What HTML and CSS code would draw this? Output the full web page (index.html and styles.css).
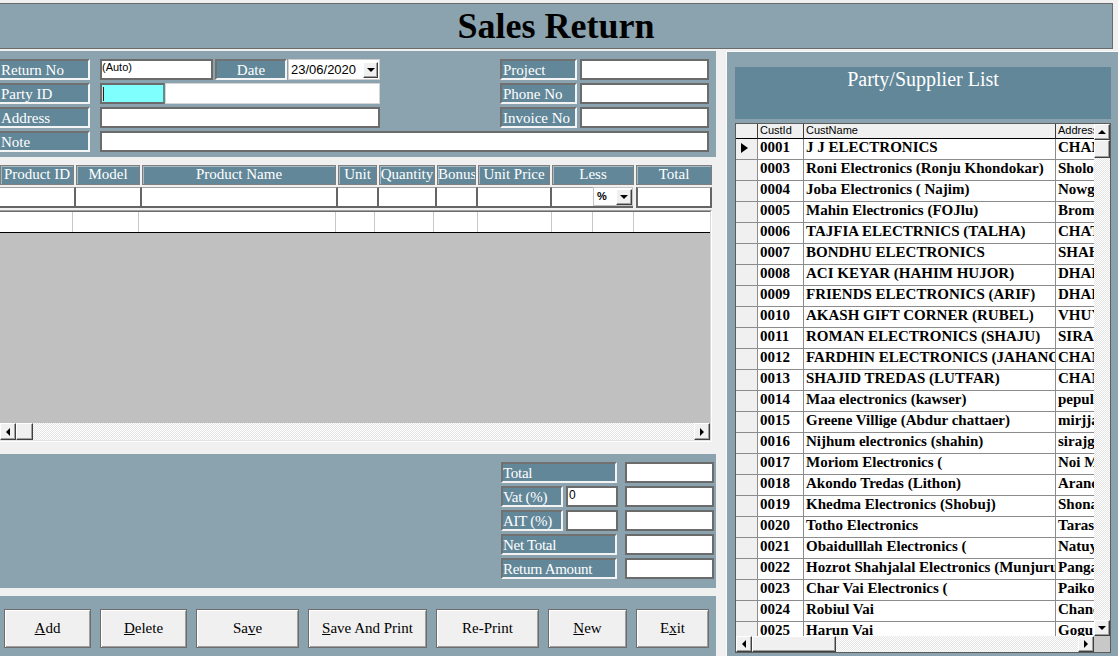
FILE: index.html
```html
<!DOCTYPE html>
<html>
<head>
<meta charset="utf-8">
<title>Sales Return</title>
<link rel="stylesheet" href="styles.css">
</head>
<body>
<div class="title">Sales Return</div>
<div class="main">
  <div class="left">
    <div class="form">
      <div class="frow">
        <div class="lbl first">Return No</div>
        <div class="inp auto">(Auto)</div>
        <div class="lbl dlbl">Date</div>
        <div class="date">23/06/2020<span class="dd"><span class="ad"></span></span></div>
        <div class="spacer"></div>
        <div class="lbl rlbl">Project</div>
        <div class="inp rinp"></div>
      </div>
      <div class="frow">
        <div class="lbl first">Party ID</div>
        <div class="pid"><span class="caret"></span></div>
        <div class="pname"></div>
        <div class="spacer"></div>
        <div class="lbl rlbl">Phone No</div>
        <div class="inp rinp"></div>
      </div>
      <div class="frow">
        <div class="lbl first">Address</div>
        <div class="inp addr"></div>
        <div class="spacer"></div>
        <div class="lbl rlbl">Invoice No</div>
        <div class="inp rinp"></div>
      </div>
      <div class="frow">
        <div class="lbl first">Note</div>
        <div class="inp note"></div>
      </div>
    </div>

    <div class="ghead">
      <div class="gh">Product ID</div>
      <div class="gh">Model</div>
      <div class="gh">Product Name</div>
      <div class="gh">Unit</div>
      <div class="gh">Quantity</div>
      <div class="gh">Bonus</div>
      <div class="gh">Unit Price</div>
      <div class="gh">Less</div>
      <div class="gh">Total</div>
    </div>
    <div class="girow">
      <div class="gi"></div>
      <div class="gi"></div>
      <div class="gi"></div>
      <div class="gi"></div>
      <div class="gi"></div>
      <div class="gi"></div>
      <div class="gi"></div>
      <div class="gi less"><div class="sel"><span class="selv">%</span><span class="dd"><span class="ad"></span></span></div></div>
      <div class="gi gtot"></div>
    </div>

    <div class="gbox">
      <div class="gin">
        <div class="grow">
          <div class="gc c1"></div><div class="gc c2"></div><div class="gc c3"></div><div class="gc c4"></div><div class="gc c5"></div><div class="gc c6"></div><div class="gc c7"></div><div class="gc c8"></div><div class="gc c9"></div><div class="gc clast"></div>
        </div>
        <div class="garea"></div>
        <div class="hscroll">
          <div class="sbtn"><span class="al"></span></div>
          <div class="sbtn thumb"></div>
          <div class="track"></div>
          <div class="sbtn"><span class="ar"></span></div>
        </div>
      </div>
    </div>

    <div class="tot">
      <div class="trow"><div class="lbl tlbl">Total</div><div class="inp tval"></div></div>
      <div class="trow"><div class="lbl vlbl">Vat (%)</div><div class="inp vin">0</div><div class="inp tval tval2"></div></div>
      <div class="trow"><div class="lbl vlbl">AIT (%)</div><div class="inp vin"></div><div class="inp tval tval2"></div></div>
      <div class="trow"><div class="lbl tlbl">Net Total</div><div class="inp tval"></div></div>
      <div class="trow"><div class="lbl tlbl">Return Amount</div><div class="inp tval"></div></div>
    </div>

    <div class="btns">
      <div class="btn b87"><u>A</u>dd</div>
      <div class="btn b87"><u>D</u>elete</div>
      <div class="btn b103">Sa<u>v</u>e</div>
      <div class="btn b119"><u>S</u>ave And Print</div>
      <div class="btn b103">Re-Print</div>
      <div class="btn b79"><u>N</u>ew</div>
      <div class="btn b73">E<u>x</u>it</div>
    </div>
  </div>

  <div class="right">
    <div class="phead">Party/Supplier List</div>
    <div class="pgrid">
      <div class="ptable">
        <div class="prow phdr"><div class="sc"></div><div>CustId</div><div>CustName</div><div>Address</div></div>
        <div class="prow"><div class="sc"><span class="tri"></span></div><div>0001</div><div>J J ELECTRONICS</div><div>CHAND</div></div>
        <div class="prow"><div class="sc"></div><div>0003</div><div>Roni Electronics (Ronju Khondokar)</div><div>Sholo</div></div>
        <div class="prow"><div class="sc"></div><div>0004</div><div>Joba Electronics ( Najim)</div><div>Nowga</div></div>
        <div class="prow"><div class="sc"></div><div>0005</div><div>Mahin Electronics (FOJlu)</div><div>Brom</div></div>
        <div class="prow"><div class="sc"></div><div>0006</div><div>TAJFIA ELECTRNICS (TALHA)</div><div>CHAT</div></div>
        <div class="prow"><div class="sc"></div><div>0007</div><div>BONDHU ELECTRONICS</div><div>SHAH</div></div>
        <div class="prow"><div class="sc"></div><div>0008</div><div>ACI KEYAR (HAHIM HUJOR)</div><div>DHAK</div></div>
        <div class="prow"><div class="sc"></div><div>0009</div><div>FRIENDS ELECTRONICS (ARIF)</div><div>DHAK</div></div>
        <div class="prow"><div class="sc"></div><div>0010</div><div>AKASH GIFT CORNER (RUBEL)</div><div>VHUY</div></div>
        <div class="prow"><div class="sc"></div><div>0011</div><div>ROMAN ELECTRONICS (SHAJU)</div><div>SIRA</div></div>
        <div class="prow"><div class="sc"></div><div>0012</div><div>FARDHIN ELECTRONICS (JAHANG</div><div>CHAN</div></div>
        <div class="prow"><div class="sc"></div><div>0013</div><div>SHAJID TREDAS (LUTFAR)</div><div>CHAN</div></div>
        <div class="prow"><div class="sc"></div><div>0014</div><div>Maa electronics (kawser)</div><div>pepul</div></div>
        <div class="prow"><div class="sc"></div><div>0015</div><div>Greene Villige (Abdur chattaer)</div><div>mirjja</div></div>
        <div class="prow"><div class="sc"></div><div>0016</div><div>Nijhum electronics (shahin)</div><div>sirajg</div></div>
        <div class="prow"><div class="sc"></div><div>0017</div><div>Moriom Electronics (</div><div>Noi M</div></div>
        <div class="prow"><div class="sc"></div><div>0018</div><div>Akondo Tredas (Lithon)</div><div>Aranc</div></div>
        <div class="prow"><div class="sc"></div><div>0019</div><div>Khedma Electronics (Shobuj)</div><div>Shona</div></div>
        <div class="prow"><div class="sc"></div><div>0020</div><div>Totho Electronics</div><div>Taras</div></div>
        <div class="prow"><div class="sc"></div><div>0021</div><div>Obaidulllah Electronics (</div><div>Natuy</div></div>
        <div class="prow"><div class="sc"></div><div>0022</div><div>Hozrot Shahjalal Electronics (Munjuru</div><div>Panga</div></div>
        <div class="prow"><div class="sc"></div><div>0023</div><div>Char Vai Electronics (</div><div>Paiko</div></div>
        <div class="prow"><div class="sc"></div><div>0024</div><div>Robiul Vai</div><div>Chanc</div></div>
        <div class="prow"><div class="sc"></div><div>0025</div><div>Harun Vai</div><div>Gogu</div></div>
      </div>
      <div class="vscroll">
        <div class="sbtn sq"><span class="au"></span></div>
        <div class="sbtn vthumb"></div>
        <div class="track"></div>
        <div class="sbtn sq"><span class="ad"></span></div>
      </div>
      <div class="hscroll2">
        <div class="sbtn sq"><span class="al"></span></div>
        <div class="sbtn hthumb"></div>
        <div class="track"></div>
        <div class="sbtn sq"><span class="ar"></span></div>
      </div>
      <div class="corner"></div>
    </div>
  </div>
</div>
</body>
</html>
```
FILE: styles.css
```css
* { box-sizing: border-box; }
html, body { margin: 0; padding: 0; }
body {
  width: 1118px;
  height: 656px;
  overflow: hidden;
  background: #f0f0f0;
  font-family: "Liberation Serif", "Times New Roman", serif;
  color: #000;
}

.title {
  margin: 3px 0 0 -1px;
  width: 1114px;
  height: 46px;
  border: 1px solid #6b6b6b;
  background: #8ba3ae;
  text-align: center;
  font-size: 36px;
  font-weight: bold;
  line-height: 44px;
}

.main { display: flex; margin-top: 2px; height: 605px; }
.left { width: 716px; flex: none; display: flex; flex-direction: column; }

/* form */
.form {
  height: 106px;
  flex: none;
  background: #8ba3ae;
  padding: 8px 7px 0 0;
  display: flex;
  flex-direction: column;
  gap: 3px;
}
.frow { display: flex; height: 21px; }
.spacer { flex: 1; }

.lbl {
  background: #628799;
  color: #fff;
  font-size: 15px;
  line-height: 17px;
  padding-top: 1px;
  border: 2px solid;
  border-color: #717171 #f4f4f4 #f4f4f4 #717171;
  white-space: nowrap;
  overflow: hidden;
  flex: none;
}
.lbl.first { width: 90px; border-left: 0; padding-left: 1px; margin-right: 10px; }
.inp { background: #fff; border: 2px solid #6b6b6b; flex: none; }
.auto {
  width: 113px;
  font: 11px/13px "Liberation Sans", Arial, sans-serif;
  padding-left: 0;
}
.dlbl { width: 72px; margin-left: 2px; text-align: center; }
.date {
  width: 92px;
  margin-left: 1px;
  background: #fff;
  border: 1px solid #cfcfcf;
  font: 13px/17px "Liberation Sans", Arial, sans-serif;
  display: flex;
  align-items: center;
  padding-left: 2px;
}
.dd {
  margin-left: auto;
  width: 15px;
  height: 17px;
  background: #f0f0f0;
  border: 1px solid;
  border-color: #fff #404040 #404040 #fff;
  box-shadow: inset -1px -1px 0 #a0a0a0;
  display: flex;
  align-items: center;
  justify-content: center;
  flex: none;
}
.date .dd { margin-right: 1px; height: 16px; }
.rlbl { width: 77px; padding-left: 1px; }
.rinp { width: 129px; margin-left: 3px; }
.pid {
  width: 65px;
  background: #80ffff;
  border: 2px solid;
  border-color: #6b6b6b #5c8f8f #6b6b6b #6b6b6b;
  padding: 2px 0 0 1px;
}
.caret { display: block; width: 1px; height: 14px; background: #800000; }
.pname { width: 215px; background: #fff; border: 1px solid #d4d4d4; }
.addr { width: 280px; }
.note { flex: 1; }

/* grid header + input row */
.ghead {
  display: grid;
  grid-template-columns: 74px 64px 194px 39px 56px 39px 72px 82px 76px;
  column-gap: 2px;
  height: 20px;
  margin-top: 8px;
  flex: none;
}
.gh {
  background: #628799;
  color: #fff;
  font-size: 15px;
  line-height: 17px;
  text-align: center;
  border: 1px solid #7f7f7f;
  box-shadow: inset 1px 1px 0 #a8b8c0;
  white-space: nowrap;
  overflow: hidden;
}
.girow {
  display: grid;
  grid-template-columns: 76px 66px 196px 41px 58px 41px 74px 81px 79px;
  height: 21px;
  margin-top: 2px;
  flex: none;
}
.gi {
  background: #fff;
  border-right: 2px solid #656565;
  border-bottom: 2px solid #656565;
  border-top: 1px solid #a0a0a0;
}
.less { border-right: 0; display: flex; justify-content: flex-end; align-items: flex-start; }
.gtot { margin-left: 3px; border-left: 2px solid #656565; }
.sel {
  width: 40px;
  height: 19px;
  margin-top: -1px;
  border: 1px solid #c4c4c4;
  background: #fff;
  display: flex;
  align-items: center;
}
.selv { font: bold 11px/13px "Liberation Sans", Arial, sans-serif; width: 21px; padding-left: 3px; }
.sel .dd { margin-left: 1px; width: 16px; height: 16px; }

/* grid body */
.gbox {
  width: 712px;
  height: 232px;
  margin-top: 2px;
  flex: none;
  border-top: 1px solid #a0a0a0;
  border-right: 1px solid #fff;
  border-bottom: 1px solid #fff;
}
.gin {
  height: 100%;
  border-top: 1px solid #6d6d6d;
  border-right: 1px solid #d8d8d8;
  border-bottom: 1px solid #e3e3e3;
  display: flex;
  flex-direction: column;
}
.grow { display: flex; height: 21px; flex: none; background: #fff; border-bottom: 1px solid #000; }
.gc { border-right: 1px solid #c8c8c8; flex: none; }
.c1 { width: 73px; } .c2 { width: 66px; } .c3 { width: 197px; } .c4 { width: 39px; }
.c5 { width: 59px; } .c6 { width: 44px; } .c7 { width: 74px; } .c8 { width: 41px; } .c9 { width: 41px; }
.clast { flex: 1; border-right: 0; }
.garea { flex: 1; background: #c0c0c0; }

.hscroll { height: 17px; display: flex; flex: none; }
.track {
  flex: 1;
  background-color: #fff;
  background-image: repeating-conic-gradient(#e4e4e4 0 25%, #fff 0 50%);
  background-size: 2px 2px;
}
.sbtn {
  width: 16px;
  background: #f0f0f0;
  border: 1px solid;
  border-color: #fff #404040 #404040 #fff;
  box-shadow: inset -1px -1px 0 #a0a0a0;
  display: flex;
  align-items: center;
  justify-content: center;
  flex: none;
}
.hscroll .thumb { width: 17px; }
.al { width: 0; height: 0; border-top: 4px solid transparent; border-bottom: 4px solid transparent; border-right: 4px solid #000; }
.ar { width: 0; height: 0; border-top: 4px solid transparent; border-bottom: 4px solid transparent; border-left: 4px solid #000; }
.au { width: 0; height: 0; border-left: 4px solid transparent; border-right: 4px solid transparent; border-bottom: 4px solid #000; }
.ad { width: 0; height: 0; border-left: 4px solid transparent; border-right: 4px solid transparent; border-top: 4px solid #000; }

/* totals */
.tot {
  height: 134px;
  margin-top: 12px;
  flex: none;
  background: #8ba3ae;
  padding: 8px 2px 0 0;
  display: flex;
  flex-direction: column;
  align-items: flex-end;
  gap: 3px;
}
.trow { display: flex; height: 21px; }
.tlbl { width: 116px; padding-left: 0; letter-spacing: -0.3px; }
.vlbl { width: 62px; letter-spacing: -0.3px; }
.tval { width: 89px; margin-left: 8px; }
.tval2 { margin-left: 7px; }
.vin {
  width: 52px;
  margin-left: 3px;
  font: 12px/15px "Liberation Sans", Arial, sans-serif;
  padding-left: 1px;
}

/* buttons */
.btns {
  flex: 1;
  margin-top: 8px;
  background: #8ba3ae;
  display: flex;
  gap: 9px;
  padding: 13px 0 0 4px;
  align-items: flex-start;
}
.btn {
  height: 39px;
  background: #f0f0f0;
  border: 1px solid #6d6d6d;
  box-shadow: inset 1px 1px 0 #fff, inset -1px -1px 0 #a0a0a0;
  font-size: 15px;
  display: flex;
  align-items: center;
  justify-content: center;
  flex: none;
  white-space: nowrap;
}
.b87 { width: 87px; } .b103 { width: 103px; } .b119 { width: 119px; }
.b79 { width: 79px; } .b73 { width: 73px; }

/* right panel */
.right {
  width: 392px;
  margin-left: 10px;
  flex: none;
  background: #8ba3ae;
  border-top: 1px solid #fafafa;
  border-left: 1px solid #fafafa;
  padding: 15px 7px 3px 8px;
  display: flex;
  flex-direction: column;
}
.phead {
  height: 52px;
  flex: none;
  background: #628799;
  color: #fff;
  font-size: 20px;
  line-height: 24px;
  text-align: center;
}
.pgrid {
  margin-top: 4px;
  flex: 1;
  min-height: 0;
  border: 1px solid #5c5c5c;
  background: #fff;
  display: grid;
  grid-template-columns: 1fr 16px;
  grid-template-rows: 1fr 16px;
  overflow: hidden;
}
.ptable { overflow: hidden; min-height: 0; }
.prow { display: grid; grid-template-columns: 22px 46px 252px 1fr; height: 21px; }
.prow > div {
  border-right: 1px solid #8c8c8c;
  border-bottom: 1px solid #8c8c8c;
  overflow: hidden;
  white-space: nowrap;
  font-weight: bold;
  font-size: 15px;
  line-height: 17px;
  padding-left: 2px;
}
.prow > div:last-child { border-right: 0; }
.prow > .sc { background: #f0f0f0; padding-left: 0; }
.phdr { height: 15px; }
.phdr > div {
  font: 11px/13px "Liberation Sans", Arial, sans-serif;
  background: #f0f0f0;
  border-right-color: #3c3c3c;
  border-bottom-color: #000;
  padding-left: 2px;
}
.tri {
  display: block;
  width: 0;
  height: 0;
  margin: 4px 0 0 5px;
  border-top: 5px solid transparent;
  border-bottom: 5px solid transparent;
  border-left: 7px solid #000;
}
.vscroll { display: flex; flex-direction: column; min-height: 0; }
.sq { height: 16px; }
.vthumb { height: 18px; }
.hscroll2 { display: flex; }
.hscroll2 .sbtn { height: 16px; }
.hthumb { width: 84px; }
.corner { background: #c8c8c8; }
```
